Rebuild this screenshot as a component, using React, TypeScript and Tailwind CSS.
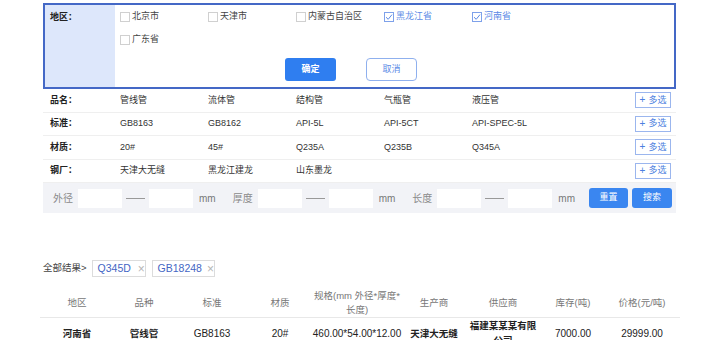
import React from 'react';

const regions = [
  { name: '北京市', checked: false },
  { name: '天津市', checked: false },
  { name: '内蒙古自治区', checked: false },
  { name: '黑龙江省', checked: true },
  { name: '河南省', checked: true },
  { name: '广东省', checked: false },
];

const attrRows = [
  { label: '品名：', values: ['管线管', '流体管', '结构管', '气瓶管', '液压管'] },
  { label: '标准：', values: ['GB8163', 'GB8162', 'API-5L', 'API-5CT', 'API-SPEC-5L'] },
  { label: '材质：', values: ['20#', '45#', 'Q235A', 'Q235B', 'Q345A'] },
  { label: '钢厂：', values: ['天津大无缝', '黑龙江建龙', '山东墨龙'] },
];

const columns = [
  { w: 'w-[74px]' },
  { w: 'w-[60px]' },
  { w: 'w-[76px]' },
  { w: 'w-[60px]' },
  { w: 'w-[94px]' },
  { w: 'w-[60px]' },
  { w: 'w-[78px]' },
  { w: 'w-[62px]' },
  { w: 'w-[76px]' },
];

const Checkbox: React.FC<{ checked: boolean }> = ({ checked }) =>
  checked ? (
    <span className="w-[10px] h-[10px] border border-[#7ea1ea] bg-white flex items-center justify-center shrink-0">
      <svg width="8" height="8" viewBox="0 0 8 8">
        <path d="M1 4.2 L3.2 6.3 L7 1.6" fill="none" stroke="#5d8ae6" strokeWidth="1" />
      </svg>
    </span>
  ) : (
    <span className="w-[10px] h-[10px] border border-[#d0d0d0] bg-white shrink-0" />
  );

const RangeGroup: React.FC<{ label: string }> = ({ label }) => (
  <div className="flex items-center">
    <span className="text-[#8a8a8a] w-[20px]">{label}</span>
    <div className="ml-[5px] w-[44px] h-[19px] bg-white" />
    <div className="mx-[4px] w-[19px] h-px bg-[#999]" />
    <div className="w-[44px] h-[19px] bg-white" />
    <span className="ml-[6px] text-[#777]">mm</span>
  </div>
);

export default function App() {
  return (
    <div className="w-[720px] h-[340px] overflow-hidden bg-white font-['Liberation_Sans','Noto_Sans_CJK_SC',sans-serif] text-[9px] text-[#333] pt-[3px]">
      {/* 地区 panel */}
      <div className="ml-[43px] w-[633px] border-2 border-[#4468c6] flex">
        <div className="w-[70px] bg-[#dde7fb] pl-[5px] pt-[5px] font-bold text-[#222] leading-[14px]">地区：</div>
        <div className="flex-1 pl-[5px] pb-[6px]">
          <div className="w-[440px] flex flex-wrap">
            {regions.map((r) => (
              <label key={r.name} className="w-[88px] h-[23px] flex items-center gap-[2px]">
                <Checkbox checked={r.checked} />
                <span className={r.checked ? 'text-[#5b8ae6]' : 'text-[#444]'}>{r.name}</span>
              </label>
            ))}
          </div>
          <div className="mt-[7px] ml-[165px] flex gap-[30px]">
            <button className="w-[51px] h-[23px] rounded-[3px] bg-[#2f7ef0] text-white font-bold">确定</button>
            <button className="w-[51px] h-[23px] rounded-[4px] border border-[#8fb0ee] bg-white text-[#5b8ae6]">取消</button>
          </div>
        </div>
      </div>

      {/* attribute rows */}
      <div className="ml-[43px] w-[633px]">
        {attrRows.map((row) => (
          <div key={row.label} className="h-[23.5px] border-b border-[#efefef] flex items-center">
            <span className="w-[77px] pl-[7px] font-bold text-[#222]">{row.label}</span>
            {row.values.map((v) => (
              <span key={v} className="w-[88px] text-[#333]">{v}</span>
            ))}
            <button className="ml-auto mr-[5px] w-[36px] h-[16px] border border-[#9bb6ee] text-[#4d7fe0] flex items-center justify-center gap-[3px]">
              <span className="text-[10px] leading-none">+</span>
              <span>多选</span>
            </button>
          </div>
        ))}
      </div>

      {/* range filter */}
      <div className="ml-[43px] w-[633px] h-[30px] bg-[#f2f3f7] flex items-center pl-[10px] text-[10px]">
        <div className="flex items-center gap-[17px]">
          <RangeGroup label="外径" />
          <RangeGroup label="厚度" />
          <RangeGroup label="长度" />
        </div>
        <button className="ml-[14px] w-[39px] h-[20px] rounded-[3px] bg-[#3a86f0] text-white text-[9px]">重置</button>
        <button className="ml-[4px] w-[40px] h-[20px] rounded-[3px] bg-[#3a86f0] text-white text-[9px]">搜索</button>
      </div>

      {/* results */}
      <div className="ml-[43px] mt-[47px] flex items-center h-[17px]">
        <span className="text-[9.5px] text-[#444]">全部结果&gt;</span>
        <span className="ml-[5px] w-[54px] h-[17px] border border-[#dcdcdc] flex items-center pl-[5px] text-[10.5px] text-[#4466c4]">
          Q345D<span className="ml-[7px] text-[#b5b5b5] text-[12px] leading-none">×</span>
        </span>
        <span className="ml-[6px] w-[63px] h-[17px] border border-[#dcdcdc] flex items-center pl-[5px] text-[10.5px] text-[#4466c4]">
          GB18248<span className="ml-[5px] text-[#b5b5b5] text-[12px] leading-none">×</span>
        </span>
      </div>

      {/* table */}
      <div className="ml-[40px] w-[640px] mt-[11px]">
        <div className="flex h-[30px] border-b border-[#e8e8e8] text-[9.5px] text-[#777] leading-[14px]">
          {['地区', '品种', '标准', '材质', 'spec', '生产商', '供应商', '库存(吨)', '价格(元/吨)'].map((h, i) => (
            <div key={h} className={`${columns[i].w} flex items-center justify-center text-center`}>
              {h === 'spec' ? (
                <span>
                  规格(mm 外径*厚度*
                  <br />
                  长度)
                </span>
              ) : (
                h
              )}
            </div>
          ))}
        </div>
        <div className="flex h-[30px] text-[10px] text-[#222] leading-[15px]">
          <div className={`${columns[0].w} flex items-center justify-center font-bold text-[9.5px]`}>河南省</div>
          <div className={`${columns[1].w} flex items-center justify-center font-bold text-[9.5px]`}>管线管</div>
          <div className={`${columns[2].w} flex items-center justify-center`}>GB8163</div>
          <div className={`${columns[3].w} flex items-center justify-center`}>20#</div>
          <div className={`${columns[4].w} flex items-center justify-center`}>460.00*54.00*12.00</div>
          <div className={`${columns[5].w} flex items-center justify-center font-bold text-[9.5px]`}>天津大无缝</div>
          <div className={`${columns[6].w} flex items-center justify-center text-center font-bold text-[9.5px]`}>
            <span>
              福建某某某有限
              <br />
              公司
            </span>
          </div>
          <div className={`${columns[7].w} flex items-center justify-center`}>7000.00</div>
          <div className={`${columns[8].w} flex items-center justify-center`}>29999.00</div>
        </div>
      </div>
    </div>
  );
}
